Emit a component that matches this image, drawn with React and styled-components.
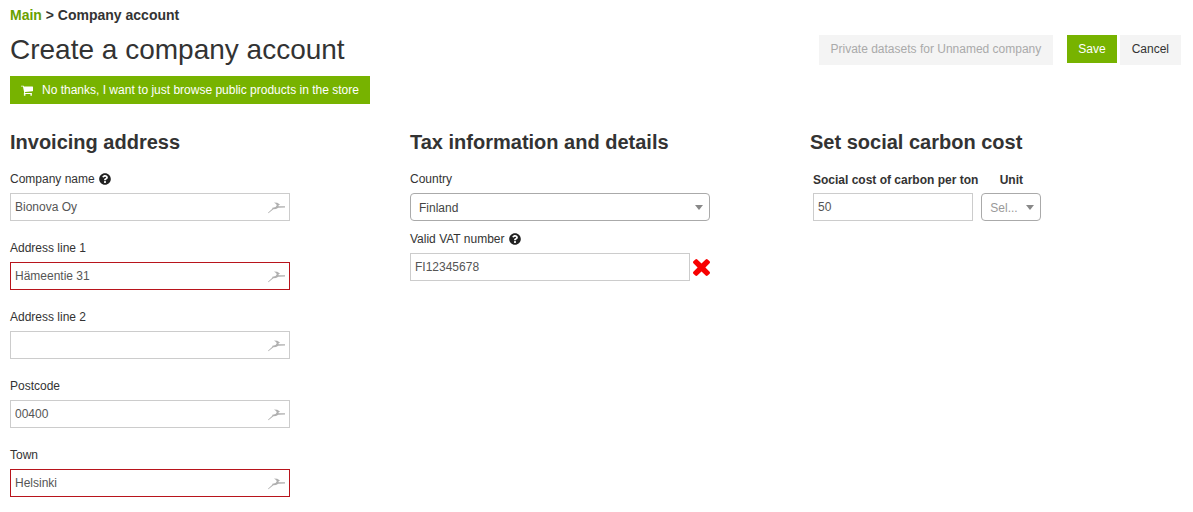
import React, { useState } from "react";
import styled, { createGlobalStyle, css } from "styled-components";
import { FaQuestionCircle } from "react-icons/fa";

const addressFields = [
  { name: "companyName", label: "Company name", help: true },
  { name: "addressLine1", label: "Address line 1", required: true },
  { name: "addressLine2", label: "Address line 2" },
  { name: "postcode", label: "Postcode" },
  { name: "town", label: "Town", required: true }
];

const BirdIcon = () => (
  <svg width="17" height="13" viewBox="0 0 17 13" aria-hidden="true">
    <path
      d="M0 11.8 L4.6 7.6 L3.8 6.9 L7.6 5.9 L8.8 4.2 L8 3 L6 1.6 L9.2 1.8 L12 3.4 L10.4 4.4 L10.6 5.3 L17 5.3 L17 6.5 L10.4 6.8 L8 8 L5.4 8.2 L0.4 12.2 Z"
      fill="#b0b0b0"
    />
  </svg>
);

const CrossIcon = () => (
  <svg width="17" height="17" viewBox="302 366 1188 1188" aria-hidden="true">
    <path
      d="M1490 1322q0 40-28 68l-136 136q-28 28-68 28t-68-28l-294-294-294 294q-28 28-68 28t-68-28l-136-136q-28-28-28-68t28-68l294-294-294-294q-28-28-28-68t28-68l136-136q28-28 68-28t68 28l294 294 294-294q28-28 68-28t68 28l136 136q28 28 28 68t-28 68l-294 294 294 294q28 28 28 68z"
      fill="#f80000"
    />
  </svg>
);

const CartIcon = () => (
  <svg width="12" height="11" viewBox="64 192 1664 1472" aria-hidden="true">
    <path
      d="M704 1536q0 52-38 90t-90 38-90-38-38-90 38-90 90-38 90 38 38 90zm896 0q0 52-38 90t-90 38-90-38-38-90 38-90 90-38 90 38 38 90zm128-1088v512q0 24-16.500 42.500t-40.500 21.500l-1044 122q13 60 13 70 0 16-24 64h920q26 0 45 19t19 45-19 45-45 19h-1024q-26 0-45-19t-19-45q0-11 8-31.500t16-36 21.500-40 15.500-29.500l-177-823h-204q-26 0-45-19t-19-45 19-45 45-19h256q16 0 28.500 6.500t19.500 15.500 13 24.500 8 26 5.500 29.500 4.500 26h1201q26 0 45 19t19 45z"
      fill="currentColor"
    />
  </svg>
);

const Help = () => <HelpIcon size={12} aria-label="Help" />;

const App = () => {
  const [form, setForm] = useState({
    companyName: "Bionova Oy",
    addressLine1: "Hämeentie 31",
    addressLine2: "",
    postcode: "00400",
    town: "Helsinki",
    country: "Finland",
    vatNumber: "FI12345678",
    carbonCost: "50",
    unit: ""
  });

  const handleInputChange = e => {
    const { name, value } = e.target;
    setForm(prevForm => ({ ...prevForm, [name]: value }));
  };

  return (
    <Page>
      <GlobalStyle />
      <Breadcrumbs>
        <a href="#main">Main</a> &gt; Company account
      </Breadcrumbs>
      <Header>
        <Title>Create a company account</Title>
        <Actions>
          <Button type="button" disabled>
            Private datasets for Unnamed company
          </Button>
          <ButtonGroup>
            <Button type="submit" form="company-form" $primary>
              Save
            </Button>
            <Button type="button">Cancel</Button>
          </ButtonGroup>
        </Actions>
      </Header>
      <Button type="button" $primary>
        <CartIcon />
        No thanks, I want to just browse public products in the store
      </Button>

      <Form id="company-form" onSubmit={e => e.preventDefault()}>
        <Column>
          <SectionTitle>Invoicing address</SectionTitle>
          <FieldList>
            {addressFields.map(({ name, label, help, required }) => (
              <Field key={name}>
                <Label htmlFor={name}>
                  {label} {help && <Help />}
                </Label>
                <InputFrame $required={required}>
                  <Input
                    id={name}
                    name={name}
                    type="text"
                    value={form[name]}
                    onChange={handleInputChange}
                  />
                  <BirdIcon />
                </InputFrame>
              </Field>
            ))}
          </FieldList>
        </Column>

        <Column>
          <SectionTitle>Tax information and details</SectionTitle>
          <FieldList $tight>
            <Field>
              <Label htmlFor="country">Country</Label>
              <SelectFrame $width="300px">
                <Select
                  id="country"
                  name="country"
                  value={form.country}
                  onChange={handleInputChange}
                >
                  <option>Finland</option>
                  <option>Sweden</option>
                  <option>Norway</option>
                </Select>
              </SelectFrame>
            </Field>
            <Field>
              <Label htmlFor="vatNumber">
                Valid VAT number <Help />
              </Label>
              <InlineRow>
                <InputFrame>
                  <Input
                    id="vatNumber"
                    name="vatNumber"
                    type="text"
                    value={form.vatNumber}
                    onChange={handleInputChange}
                  />
                </InputFrame>
                <CrossIcon />
              </InlineRow>
            </Field>
          </FieldList>
        </Column>

        <Column>
          <SectionTitle>Set social carbon cost</SectionTitle>
          <CostGrid>
            <CostLabel htmlFor="carbonCost">Social cost of carbon per ton</CostLabel>
            <CostLabel htmlFor="unit">Unit</CostLabel>
            <InputFrame $width="160px">
              <Input
                id="carbonCost"
                name="carbonCost"
                type="text"
                value={form.carbonCost}
                onChange={handleInputChange}
              />
            </InputFrame>
            <SelectFrame $width="60px">
              <Select
                id="unit"
                name="unit"
                value={form.unit}
                onChange={handleInputChange}
                $placeholder={!form.unit}
              >
                <option value="">Sel...</option>
                <option>EUR</option>
                <option>USD</option>
              </Select>
            </SelectFrame>
          </CostGrid>
        </Column>
      </Form>
    </Page>
  );
};

const GlobalStyle = createGlobalStyle`
  *, *::before, *::after {
    box-sizing: border-box;
  }
  body {
    margin: 0;
    background: #fff;
    color: #333;
    font-family: "Liberation Sans", Arial, sans-serif;
    font-size: 12px;
    line-height: 20px;
  }
  input, select, button {
    font: inherit;
  }
`;

const Page = styled.main`
  padding: 5px 12px 15px 10px;
`;

const Breadcrumbs = styled.nav`
  font-size: 14px;
  font-weight: bold;

  a {
    color: #69a000;
    text-decoration: none;
  }
`;

const Header = styled.header`
  display: flex;
  justify-content: space-between;
  align-items: center;
  margin-bottom: 8px;
  padding-top: 7px;
`;

const Title = styled.h1`
  margin: 0;
  font-size: 28px;
  font-weight: normal;
  line-height: 36px;
`;

const Actions = styled.div`
  display: flex;
  align-items: flex-start;
  gap: 14px;
`;

const ButtonGroup = styled.div`
  display: flex;
  align-items: flex-start;
  gap: 3px;
`;

const Button = styled.button`
  display: inline-flex;
  align-items: center;
  gap: 9px;
  height: 30px;
  padding: 0 12px 2px;
  border: none;
  background-color: #f4f4f4;
  color: #333;
  cursor: pointer;

  &:disabled {
    color: #aaa;
    cursor: default;
  }

  ${props =>
    props.$primary &&
    css`
      height: 28px;
      padding: 0 11px;
      background-color: #77b300;
      color: #fff;
    `}
`;

const Form = styled.form`
  display: flex;
  flex-wrap: wrap;
  gap: 20px 100px;
  margin-top: 24px;
`;

const Column = styled.section`
  flex: 0 0 300px;
`;

const SectionTitle = styled.h2`
  margin: 0 0 13px;
  font-size: 20px;
  font-weight: bold;
  line-height: 28px;
`;

const FieldList = styled.div`
  display: flex;
  flex-direction: column;
  gap: ${props => (props.$tight ? "8px" : "17px")};
`;

const Field = styled.div`
  display: flex;
  flex-direction: column;
  align-items: flex-start;
  gap: 4px;
`;

const Label = styled.label`
  display: flex;
  align-items: center;
  gap: 4px;
`;

const HelpIcon = styled(FaQuestionCircle)`
  color: #222;
`;

const InlineRow = styled.div`
  display: flex;
  align-items: center;
  gap: 3px;
`;

const InputFrame = styled.div`
  display: flex;
  align-items: center;
  width: ${props => props.$width || "280px"};
  height: 28px;
  padding: 0 4px;
  border: 1px solid ${props => (props.$required ? "#b8141c" : "#ccc")};
  background-color: #fff;
`;

const Input = styled.input`
  flex: 1;
  min-width: 0;
  padding: 0;
  border: none;
  outline: none;
  background: none;
  color: #555;
`;

const SelectFrame = styled.div`
  display: flex;
  align-items: center;
  position: relative;
  width: ${props => props.$width};
  height: 28px;
  border: 1px solid #aaa;
  border-radius: 4px;

  &::after {
    content: "";
    position: absolute;
    right: 6px;
    border: 4px solid transparent;
    border-top: 5px solid #888;
    border-bottom: none;
    pointer-events: none;
  }
`;

const Select = styled.select`
  appearance: none;
  width: 100%;
  height: 26px;
  padding: 1px 20px 0 8px;
  border: none;
  outline: none;
  background: none;
  color: ${props => (props.$placeholder ? "#999" : "#444")};
`;

const CostGrid = styled.div`
  display: grid;
  grid-template-columns: auto auto;
  justify-content: start;
  gap: 2px 3px;
  padding-left: 3px;
`;

const CostLabel = styled.label`
  font-weight: bold;
  line-height: 22px;
  text-align: center;
`;

export default App;
